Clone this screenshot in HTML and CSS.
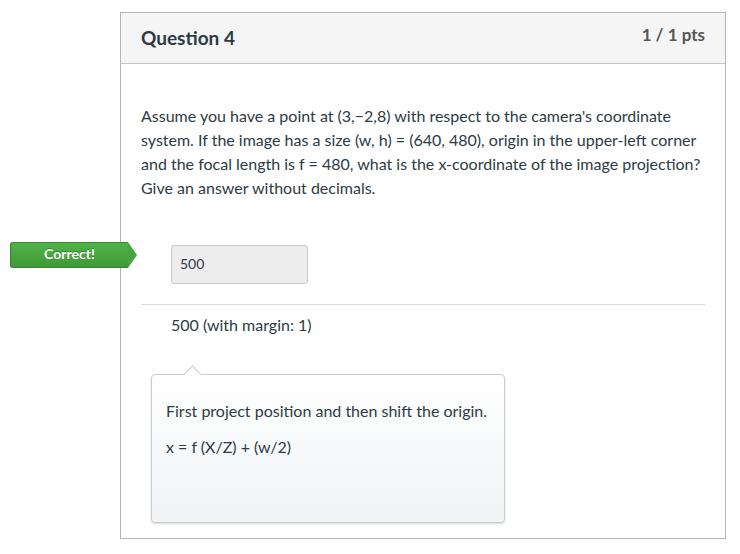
FILE: index.html
```html
<!DOCTYPE html>
<html>
<head>
<meta charset="utf-8">
<link rel="stylesheet" href="styles.css">
</head>
<body>
<div class="page">
  <div class="card">
    <div class="card-header">
      <h2 class="q-title">Question 4</h2>
      <span class="q-points">1 / 1 pts</span>
    </div>
    <div class="card-body">
      <p class="q-text">Assume you have a point at (3,&minus;2,8) with respect to the camera's coordinate system. If the image has a size (w, h) = (640, 480), origin in the upper-left corner and the focal length is f = 480, what is the x-coordinate of the image projection? Give an answer without decimals.</p>
      <div class="answer-row">
        <div class="badge">Correct!</div>
        <div class="answer-box">500</div>
      </div>
      <div class="divider"></div>
      <div class="correct-answer">500 (with margin: 1)</div>
      <div class="comment">
        <p>First project position and then shift the origin.</p>
        <p>x = f (X/Z) + (w/2)</p>
      </div>
    </div>
  </div>
</div>
</body>
</html>
```
FILE: styles.css
```css
html, body {
  margin: 0;
  padding: 0;
  background: #fff;
}
body {
  font-family: Lato, "Open Sans", sans-serif;
  color: #2d3b45;
}
.page {
  padding: 12px 0 0 120px;
}
.card {
  width: 604px;
  height: 525px;
  border: 1px solid #b4b4b4;
  box-sizing: content-box;
}
.card-header {
  height: 50px;
  background: #f5f5f5;
  border-bottom: 1px solid #c4c4c4;
  display: flex;
  justify-content: space-between;
  align-items: flex-start;
  padding: 0 20px;
}
.q-title {
  margin: 13px 0 0;
  font-size: 19px;
  font-weight: 700;
  line-height: 24px;
  color: #2d3b45;
}
.q-points {
  margin-top: 10px;
  font-size: 17px;
  font-weight: 700;
  line-height: 24px;
  color: #555;
}
.card-body {
  padding: 40px 20px 0;
}
.q-text {
  margin: 0;
  font-size: 16px;
  line-height: 24px;
}
.answer-row {
  position: relative;
  margin-top: 45px;
  padding-left: 30px;
}
.answer-box {
  width: 137px;
  height: 39px;
  box-sizing: border-box;
  background: #ededed;
  border: 1px solid #c9c9c9;
  border-radius: 3px;
  font-size: 14px;
  line-height: 36px;
  padding-left: 8px;
}
.badge {
  position: absolute;
  left: -131px;
  top: -3px;
  width: 118px;
  height: 26px;
  box-sizing: border-box;
  background: linear-gradient(#52b24a, #3d9a36);
  border: 1px solid #38862f;
  border-right: none;
  border-radius: 3px 0 0 3px;
  color: #fff;
  font-size: 14px;
  font-weight: 700;
  line-height: 22px;
  text-align: center;
  text-shadow: 0 -1px 0 rgba(0,0,0,0.25);
}
.badge::after {
  content: "";
  position: absolute;
  right: -9px;
  top: -1px;
  border-top: 13px solid transparent;
  border-bottom: 13px solid transparent;
  border-left: 9px solid #47a63f;
}
.divider {
  margin-top: 20px;
  height: 1px;
  background: #dcdcdc;
}
.correct-answer {
  margin-top: 8px;
  padding-left: 30px;
  font-size: 16px;
  line-height: 24px;
}
.comment {
  position: relative;
  margin: 37px 0 0 10px;
  width: 354px;
  height: 149px;
  box-sizing: border-box;
  border: 1px solid #c7cdd1;
  border-radius: 4px;
  background: linear-gradient(#ffffff, #f1f3f5);
  box-shadow: 0 1px 2px rgba(0,0,0,0.15);
  padding: 12px 14px;
  font-size: 16px;
  line-height: 24px;
}
.comment::before {
  content: "";
  position: absolute;
  left: 34px;
  top: -7px;
  width: 12px;
  height: 12px;
  background: #fff;
  border-left: 1px solid #c7cdd1;
  border-top: 1px solid #c7cdd1;
  transform: rotate(45deg);
}
.comment p {
  margin: 12px 0;
}
```
